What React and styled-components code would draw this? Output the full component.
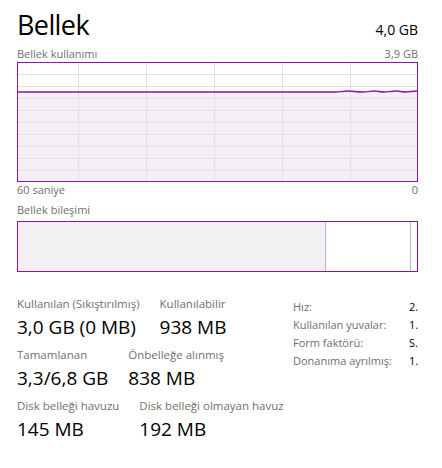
import React from "react";
import styled, { createGlobalStyle } from "styled-components";

const purple = "#8b12ae";

const GlobalStyle = createGlobalStyle`
  html, body {
    margin: 0;
    padding: 0;
    background: #ffffff;
  }
  body {
    font-family: "Open Sans", "Noto Sans", sans-serif;
    color: #000;
  }
`;

const Panel = styled.div`
  width: 442px;
  height: 468px;
  box-sizing: border-box;
  padding: 6px 24px 0 17px;
  display: flex;
  flex-direction: column;
`;

const Header = styled.div`
  display: flex;
  justify-content: space-between;
  align-items: baseline;
  height: 38px;
`;

const Title = styled.h1`
  margin: 0;
  font-size: 27px;
  font-weight: 400;
  line-height: 38px;
  letter-spacing: -0.6px;
`;

const Total = styled.div`
  font-size: 14px;
`;

const Caption = styled.div`
  display: flex;
  justify-content: space-between;
  font-size: 11px;
  line-height: 16px;
  color: #707070;
  margin-top: ${(p) => p.$top || 0}px;
`;

const ChartBox = styled.div`
  height: ${(p) => p.$height}px;
  margin-top: ${(p) => p.$top || 0}px;
  border: 1px solid ${purple};
  box-sizing: border-box;
  overflow: hidden;
  display: flex;
`;

const Segment = styled.div`
  flex: ${(p) => (p.$grow ? "1 1 0" : `0 0 ${p.$width}px`)};
  background: ${(p) => (p.$filled ? "#f2f0f3" : "#ffffff")};
  border-left: ${(p) => (p.$divider ? "1px solid #c9aad8" : "none")};
`;

const Stats = styled.div`
  display: flex;
  margin-top: 24px;
`;

const StatsLeft = styled.div`
  flex: 1;
  display: flex;
  flex-direction: column;
  gap: 6px;
`;

const StatRow = styled.div`
  display: flex;
  gap: 20px;
`;

const Stat = styled.div`
  display: flex;
  flex-direction: column;
`;

const StatLabel = styled.div`
  font-size: 11.5px;
  line-height: 16px;
  color: #707070;
  white-space: nowrap;
`;

const StatValue = styled.div`
  margin-top: 2px;
  font-size: 19px;
  line-height: 27px;
  white-space: nowrap;
`;

const Specs = styled.div`
  width: 125px;
  display: grid;
  grid-template-columns: 116px 9px;
  grid-auto-rows: 18px;
  padding-top: 2px;
  font-size: 11px;
  line-height: 18px;
`;

const SpecLabel = styled.div`
  color: #707070;
  white-space: nowrap;
`;

const SpecValue = styled.div`
  color: #000;
  overflow: hidden;
  white-space: nowrap;
`;

const UsageChart = () => {
  const w = 399;
  const h = 118;
  const cols = [60, 128, 196, 264, 332];
  const rows = [12, 24, 36, 48, 60, 72, 84, 96, 108];
  const wave =
    "M0 29 L318 29 C322 29 324 28 330 28 C336 28 338 29 344 29 C350 29 352 28 356 28 C360 28 362 29 366 29 C370 29 372 28 378 28 C382 28 384 29 388 29 C392 29 394 28 399 28";
  return (
    <svg width={w} height={h} viewBox={`0 0 ${w} ${h}`}>
      <path d={`${wave} L399 118 L0 118 Z`} fill="#f2f0f3" />
      {rows.map((y) => (
        <line key={y} x1="0" x2={w} y1={y - 0.5} y2={y - 0.5} stroke="#ead9f0" />
      ))}
      {cols.map((x) => (
        <line key={x} x1={x + 0.5} x2={x + 0.5} y1="0" y2={h} stroke="#ead9f0" />
      ))}
      <path d={wave} fill="none" stroke={purple} strokeWidth="1.4" />
    </svg>
  );
};

const App = () => {
  return (
    <>
      <GlobalStyle />
      <Panel>
        <Header>
          <Title>Bellek</Title>
          <Total>4,0 GB</Total>
        </Header>
        <Caption $top={2}>
          <span>Bellek kullanımı</span>
          <span>3,9 GB</span>
        </Caption>
        <ChartBox $height={120}>
          <UsageChart />
        </ChartBox>
        <Caption>
          <span>60 saniye</span>
          <span>0</span>
        </Caption>
        <Caption $top={4}>
          <span>Bellek bileşimi</span>
        </Caption>
        <ChartBox $height={51} $top={3}>
          <Segment $filled $width={307} />
          <Segment $divider $width={84} />
          <Segment $divider $grow />
        </ChartBox>
        <Stats>
          <StatsLeft>
            <StatRow>
              <Stat>
                <StatLabel>Kullanılan (Sıkıştırılmış)</StatLabel>
                <StatValue>3,0 GB (0 MB)</StatValue>
              </Stat>
              <Stat>
                <StatLabel>Kullanılabilir</StatLabel>
                <StatValue>938 MB</StatValue>
              </Stat>
            </StatRow>
            <StatRow>
              <Stat>
                <StatLabel>Tamamlanan</StatLabel>
                <StatValue>3,3/6,8 GB</StatValue>
              </Stat>
              <Stat>
                <StatLabel>Önbelleğe alınmış</StatLabel>
                <StatValue>838 MB</StatValue>
              </Stat>
            </StatRow>
            <StatRow>
              <Stat>
                <StatLabel>Disk belleği havuzu</StatLabel>
                <StatValue>145 MB</StatValue>
              </Stat>
              <Stat>
                <StatLabel>Disk belleği olmayan havuz</StatLabel>
                <StatValue>192 MB</StatValue>
              </Stat>
            </StatRow>
          </StatsLeft>
          <Specs>
            <SpecLabel>Hız:</SpecLabel>
            <SpecValue>2.</SpecValue>
            <SpecLabel>Kullanılan yuvalar:</SpecLabel>
            <SpecValue>1.</SpecValue>
            <SpecLabel>Form faktörü:</SpecLabel>
            <SpecValue>S.</SpecValue>
            <SpecLabel>Donanıma ayrılmış:</SpecLabel>
            <SpecValue>1.</SpecValue>
          </Specs>
        </Stats>
      </Panel>
    </>
  );
};

export default App;
